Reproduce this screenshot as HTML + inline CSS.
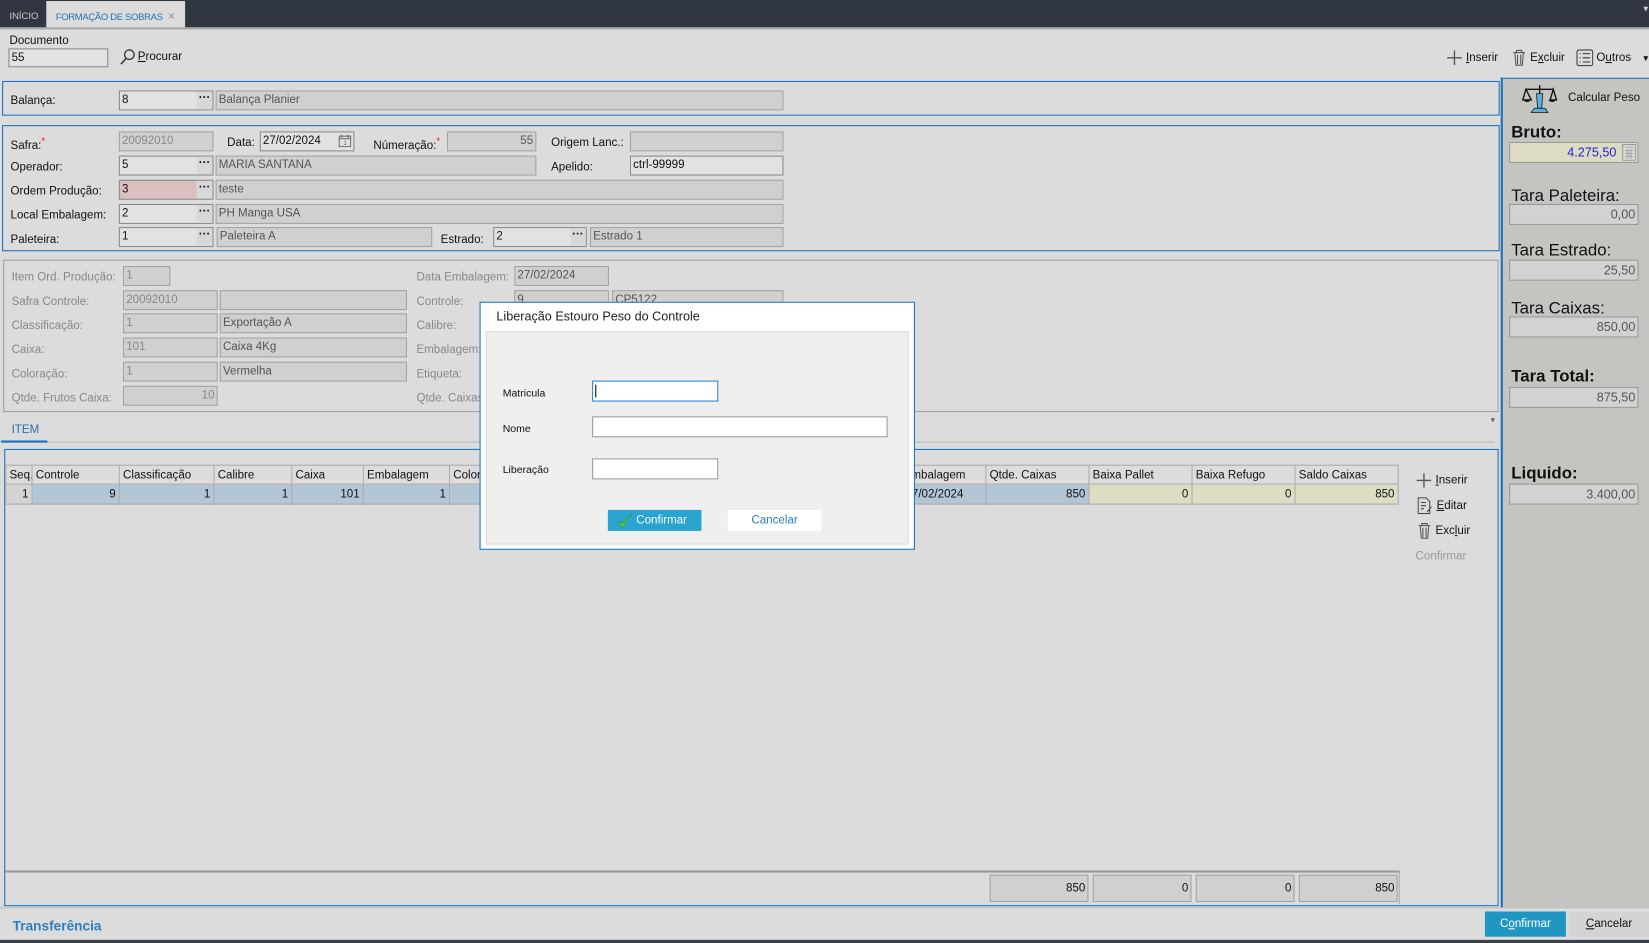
<!DOCTYPE html>
<html><head><meta charset="utf-8"><style>
html,body{margin:0;padding:0;width:1649px;height:943px;overflow:hidden;background:#dcdcdc}
#w{position:absolute;left:0;top:0;width:1568px;height:897px;transform:scale(1.05166,1.0513);transform-origin:0 0;font-family:"Liberation Sans",sans-serif;font-size:11px;color:#111}
.a{position:absolute}
.l{position:absolute;font-size:11px;white-space:nowrap}
.i{position:absolute;box-sizing:border-box;border:1px solid #8a8a8a;background:#e2e2e2;font-size:11px;padding:1px 2px;line-height:15px;white-space:nowrap;overflow:hidden}
.d{background:#d0d0d0;border-color:#a3a3a3;color:#555}
.g{color:#888}
.b{position:absolute;right:0;top:0;bottom:0;width:15px;background:#d8d8d8;text-align:center;font-weight:bold;line-height:13px;font-size:11px}
.r{text-align:right}
.pan{position:absolute;box-sizing:border-box;border:1px solid #1a6fbf}
.th,.td{position:absolute;box-sizing:border-box;border-right:1px solid #aaa;border-bottom:1px solid #aaa;padding:0 3px;line-height:18px;height:19px;font-size:11px;white-space:nowrap;overflow:hidden}
.th{background:#dcdcdc;border-top:1px solid #aaa}
.rt{position:absolute;font-size:16px;color:#111}
.ri{position:absolute;left:1435px;width:123px;height:20px;box-sizing:border-box;border:1px solid #999;background:#d2d2d2;text-align:right;padding-right:2px;color:#555;font-size:12px;line-height:18px}
u{text-decoration:underline}
</style></head><body><div id="w">
<!-- tab bar -->
<div class="a" style="left:0;top:0;width:1568px;height:26px;background:#303642"></div>
<div class="l" style="left:9px;top:10px;color:#ccc;font-size:9px">INÍCIO</div>
<div class="a" style="left:44px;top:1px;width:132px;height:26px;background:#dcdcdc"></div>
<div class="l" style="left:53px;top:10px;color:#2a6fb0;font-size:9px;letter-spacing:-0.3px">FORMAÇÃO DE SOBRAS <span style="color:#888;font-size:11px;margin-left:3px">×</span></div>
<div class="a" style="left:0;top:26px;width:1568px;height:2px;background:#a8a8a8"></div>
<div class="l" style="left:1561px;top:4px;color:#ccc;font-size:8px">▼</div>

<!-- documento -->
<div class="l" style="left:9px;top:33px">Documento</div>
<div class="i" style="left:8px;top:46px;width:95px;height:18px">55</div>
<svg class="a" style="left:113px;top:46px" width="16" height="16"><circle cx="10" cy="6" r="4.5" fill="none" stroke="#333" stroke-width="1.2"/><line x1="7" y1="9.5" x2="2" y2="15" stroke="#333" stroke-width="1.4"/></svg>
<div class="l" style="left:131px;top:48px"><u>P</u>rocurar</div>

<!-- toolbar right -->
<svg class="a" style="left:1376px;top:48px" width="14" height="14"><path d="M7 0V14M0 7H14" stroke="#555" stroke-width="1.3"/></svg>
<div class="l" style="left:1394px;top:49px"><u>I</u>nserir</div>
<svg class="a" style="left:1438px;top:47px" width="13" height="16"><path d="M1 3H12M4 3V1H9V3M2.5 3.5L3.5 15H9.5L10.5 3.5M5 5V14M8 5V14" stroke="#555" fill="none"/></svg>
<div class="l" style="left:1455px;top:49px">E<u>x</u>cluir</div>
<svg class="a" style="left:1499px;top:47px" width="16" height="16"><rect x="0.5" y="0.5" width="15" height="15" rx="2" fill="none" stroke="#333"/><path d="M3 4H4M6 4H13M3 8H4M6 8H13M3 12H4M6 12H13" stroke="#333"/></svg>
<div class="l" style="left:1518px;top:49px">O<u>u</u>tros</div>
<div class="l" style="left:1561px;top:51px;font-size:8px">▼</div>

<!-- Balança panel -->
<div class="pan" style="left:2px;top:77px;width:1424px;height:33px"></div>
<div class="l" style="left:10px;top:90px">Balança:</div>
<div class="i" style="left:113px;top:86px;width:90px;height:19px">8<span class="b">···</span></div>
<div class="i d" style="left:205px;top:86px;width:540px;height:19px">Balança Planier</div>

<!-- main panel -->
<div class="pan" style="left:2px;top:119px;width:1424px;height:120px"></div>
<div class="l" style="left:10px;top:129px">Safra:<sup style="color:red;font-size:9px">*</sup></div>
<div class="i d g" style="left:113px;top:125px;width:90px;height:19px">20092010</div>
<div class="l" style="left:216px;top:130px">Data:</div>
<div class="i" style="left:247px;top:125px;width:90px;height:19px">27/02/2024
<svg class="a" style="right:2px;top:2px" width="12" height="12"><rect x="0.5" y="1.5" width="11" height="10" fill="none" stroke="#666"/><path d="M0 4H12M3 0V3M9 0V3" stroke="#666"/><text x="4.5" y="10" font-size="6" fill="#666">1</text></svg></div>
<div class="l" style="left:355px;top:129px">Númeração:<sup style="color:red;font-size:9px">*</sup></div>
<div class="i d r" style="left:425px;top:125px;width:85px;height:19px">55</div>
<div class="l" style="left:524px;top:130px">Origem Lanc.:</div>
<div class="i d" style="left:599px;top:125px;width:146px;height:19px"></div>

<div class="l" style="left:10px;top:153px">Operador:</div>
<div class="i" style="left:113px;top:148px;width:90px;height:19px">5<span class="b">···</span></div>
<div class="i d" style="left:205px;top:148px;width:305px;height:19px">MARIA SANTANA</div>
<div class="l" style="left:524px;top:153px">Apelido:</div>
<div class="i" style="left:599px;top:148px;width:146px;height:19px">ctrl-99999</div>

<div class="l" style="left:10px;top:176px">Ordem Produção:</div>
<div class="i" style="left:113px;top:171px;width:90px;height:19px;background:#dcc0c0">3<span class="b">···</span></div>
<div class="i d" style="left:205px;top:171px;width:540px;height:19px">teste</div>

<div class="l" style="left:10px;top:199px">Local Embalagem:</div>
<div class="i" style="left:113px;top:194px;width:90px;height:19px">2<span class="b">···</span></div>
<div class="i d" style="left:205px;top:194px;width:540px;height:19px">PH Manga USA</div>

<div class="l" style="left:10px;top:222px">Paleteira:</div>
<div class="i" style="left:113px;top:216px;width:90px;height:19px">1<span class="b">···</span></div>
<div class="i d" style="left:206px;top:216px;width:205px;height:19px">Paleteira A</div>
<div class="l" style="left:419px;top:222px">Estrado:</div>
<div class="i" style="left:469px;top:216px;width:89px;height:19px">2<span class="b">···</span></div>
<div class="i d" style="left:561px;top:216px;width:184px;height:19px">Estrado 1</div>

<!-- disabled panel -->
<div class="a" style="left:3px;top:247px;width:1422px;height:145px;box-sizing:border-box;border:1px solid #a0a0a0"></div>
<div class="l g" style="left:11px;top:258px">Item Ord. Produção:</div>
<div class="i d g" style="left:117px;top:253px;width:45px;height:19px">1</div>
<div class="l g" style="left:11px;top:281px">Safra Controle:</div>
<div class="i d g" style="left:117px;top:276px;width:90px;height:19px">20092010</div>
<div class="i d" style="left:209px;top:276px;width:178px;height:19px"></div>
<div class="l g" style="left:11px;top:304px">Classificação:</div>
<div class="i d g" style="left:117px;top:298px;width:90px;height:19px">1</div>
<div class="i d" style="left:209px;top:298px;width:178px;height:19px">Exportação A</div>
<div class="l g" style="left:11px;top:327px">Caixa:</div>
<div class="i d g" style="left:117px;top:321px;width:90px;height:19px">101</div>
<div class="i d" style="left:209px;top:321px;width:178px;height:19px">Caixa 4Kg</div>
<div class="l g" style="left:11px;top:350px">Coloração:</div>
<div class="i d g" style="left:117px;top:344px;width:90px;height:19px">1</div>
<div class="i d" style="left:209px;top:344px;width:178px;height:19px">Vermelha</div>
<div class="l g" style="left:11px;top:373px">Qtde. Frutos Caixa:</div>
<div class="i d g r" style="left:117px;top:367px;width:90px;height:19px">10</div>
<div class="l g" style="left:396px;top:258px">Data Embalagem:</div>
<div class="i d" style="left:489px;top:253px;width:90px;height:19px">27/02/2024</div>
<div class="l g" style="left:396px;top:281px">Controle:</div>
<div class="i d" style="left:489px;top:276px;width:90px;height:19px">9</div>
<div class="i d" style="left:582px;top:276px;width:163px;height:19px">CP5122</div>
<div class="l g" style="left:396px;top:304px">Calibre:</div>
<div class="l g" style="left:396px;top:327px">Embalagem:</div>
<div class="l g" style="left:396px;top:350px">Etiqueta:</div>
<div class="l g" style="left:396px;top:373px">Qtde. Caixas:</div>

<!-- ITEM tab -->
<div class="l" style="left:11px;top:403px;color:#2a6fb0">ITEM</div>
<div class="a" style="left:1px;top:420px;width:1420px;height:1px;background:#b8b8b8"></div>
<div class="a" style="left:1px;top:419px;width:44px;height:2px;background:#1a6fbf"></div>
<div class="l" style="left:1416px;top:397px;font-size:7px;color:#666">▼</div>

<!-- grid panel -->
<div class="pan" style="left:4px;top:427px;width:1421px;height:435px"></div>
<div class="th" style="left:5px;top:442px;width:26px;border-left:1px solid #aaa">Seq.</div>
<div class="th" style="left:31px;top:442px;width:83px">Controle</div>
<div class="th" style="left:114px;top:442px;width:90px">Classificação</div>
<div class="th" style="left:204px;top:442px;width:74px">Calibre</div>
<div class="th" style="left:278px;top:442px;width:68px">Caixa</div>
<div class="th" style="left:346px;top:442px;width:82px">Embalagem</div>
<div class="th" style="left:428px;top:442px;width:92px">Coloração</div>
<div class="th" style="left:830px;top:442px;width:108px">Data Embalagem</div>
<div class="th" style="left:938px;top:442px;width:98px">Qtde. Caixas</div>
<div class="th" style="left:1036px;top:442px;width:98px">Baixa Pallet</div>
<div class="th" style="left:1134px;top:442px;width:98px">Baixa Refugo</div>
<div class="th" style="left:1232px;top:442px;width:98px">Saldo Caixas</div>
<div class="td r" style="left:5px;top:461px;width:26px;background:#d4d4d4;border-left:1px solid #aaa">1</div>
<div class="td r" style="left:31px;top:461px;width:83px;background:#b2c6d6">9</div>
<div class="td r" style="left:114px;top:461px;width:90px;background:#b2c6d6">1</div>
<div class="td r" style="left:204px;top:461px;width:74px;background:#b2c6d6">1</div>
<div class="td r" style="left:278px;top:461px;width:68px;background:#b2c6d6">101</div>
<div class="td r" style="left:346px;top:461px;width:82px;background:#b2c6d6">1</div>
<div class="td" style="left:428px;top:461px;width:92px;background:#b2c6d6"></div>
<div class="td" style="left:830px;top:461px;width:108px;background:#b2c6d6;padding-left:31px">27/02/2024</div>
<div class="td r" style="left:938px;top:461px;width:98px;background:#b2c6d6">850</div>
<div class="td r" style="left:1036px;top:461px;width:98px;background:#ddddc4">0</div>
<div class="td r" style="left:1134px;top:461px;width:98px;background:#ddddc4">0</div>
<div class="td r" style="left:1232px;top:461px;width:98px;background:#ddddc4">850</div>

<svg class="a" style="left:1347px;top:450px" width="14" height="14"><path d="M7 0V14M0 7H14" stroke="#555" stroke-width="1.3"/></svg>
<div class="l" style="left:1365px;top:451px"><u>I</u>nserir</div>
<svg class="a" style="left:1348px;top:473px" width="14" height="16"><path d="M0.5 0.5H8L11.5 4V15.5H0.5Z M3 5H8M3 8H8M3 11H6M9 14L13 9" fill="none" stroke="#444"/></svg>
<div class="l" style="left:1366px;top:475px"><u>E</u>ditar</div>
<svg class="a" style="left:1348px;top:497px" width="13" height="16"><path d="M1 3H12M4 3V1H9V3M2.5 3.5L3.5 15H9.5L10.5 3.5M5 5V14M8 5V14" stroke="#555" fill="none"/></svg>
<div class="l" style="left:1365px;top:499px">Exc<u>l</u>uir</div>
<div class="l" style="left:1346px;top:523px;color:#999">Confirmar</div>

<div class="a" style="left:5px;top:828px;width:1326px;height:2px;background:#999"></div>
<div class="a" style="left:1330px;top:828px;width:1px;height:32px;background:#aaa"></div>
<div class="i d r" style="left:941px;top:832px;width:94px;height:26px;line-height:22px;color:#111">850</div>
<div class="i d r" style="left:1039px;top:832px;width:94px;height:26px;line-height:22px;color:#111">0</div>
<div class="i d r" style="left:1137px;top:832px;width:94px;height:26px;line-height:22px;color:#111">0</div>
<div class="i d r" style="left:1235px;top:832px;width:94px;height:26px;line-height:22px;color:#111">850</div>

<!-- right panel -->
<div class="a" style="left:1427px;top:74px;width:141px;height:789px;background:#c6c4c0;box-sizing:border-box;border-left:2px solid #1a6fbf;border-top:1px solid #1a6fbf"></div>
<svg class="a" style="left:1447px;top:79px" width="34" height="30"><path d="M17 2V26M4 6H30M4 6L1 16H9ZM30 6L27 16H33Z" stroke="#111" stroke-width="1.3" fill="none"/><path d="M1 16Q5 20 9 16ZM25 16Q29 20 33 16Z" fill="#111"/><path d="M14 10H20L19 24H15Z" fill="#5ab0d8" stroke="#111" stroke-width=".7"/><path d="M9 28H25L22 24H12Z" fill="#5ab0d8" stroke="#111" stroke-width=".7"/></svg>
<div class="l" style="left:1491px;top:87px">Calcular Peso</div>
<div class="rt" style="left:1437px;top:118px;font-weight:bold">Bruto:</div>
<div class="ri" style="top:135px;background:#dcdcc4;color:#2222dd;padding-right:20px">4.275,50</div>
<svg class="a" style="left:1542px;top:137px" width="14" height="16"><rect x="1" y="0.5" width="12" height="15" fill="#ddd" stroke="#999"/><path d="M3 3H11M3 6H11M3 9H11M3 12H11M5 5V14M7 5V14M9 5V14" stroke="#aaa"/></svg>
<div class="rt" style="left:1437px;top:178px">Tara Paleteira:</div>
<div class="ri" style="top:194px">0,00</div>
<div class="rt" style="left:1437px;top:230px">Tara Estrado:</div>
<div class="ri" style="top:247px">25,50</div>
<div class="rt" style="left:1437px;top:285px">Tara Caixas:</div>
<div class="ri" style="top:301px">850,00</div>
<div class="rt" style="left:1437px;top:350px;font-weight:bold">Tara Total:</div>
<div class="ri" style="top:368px">875,50</div>
<div class="rt" style="left:1437px;top:442px;font-weight:bold">Liquido:</div>
<div class="ri" style="top:460px">3.400,00</div>

<!-- bottom -->
<div class="a" style="left:0;top:863px;width:1568px;height:1px;background:#bbb"></div>
<div class="l" style="left:12px;top:873px;color:#2a80c0;font-weight:bold;font-size:13px">Transferência</div>
<div class="a" style="left:1412px;top:867px;width:77px;height:24px;background:#2196c0;color:#fff;text-align:center;line-height:24px">C<u>o</u>nfirmar</div>
<div class="a" style="left:1492px;top:867px;width:76px;height:24px;background:#d4d4d4;text-align:center;line-height:24px"><u>C</u>ancelar</div>
<div class="a" style="left:0;top:894px;width:1568px;height:3px;background:#3a4048"></div>

<!-- dialog -->
<div class="a" style="left:456px;top:287px;width:414px;height:236px;box-sizing:border-box;border:1px solid #1a6fbf;background:#fff"></div>
<div class="l" style="left:472px;top:294px;font-size:12px;color:#222">Liberação Estouro Peso do Controle</div>
<div class="a" style="left:462px;top:315px;width:402px;height:203px;box-sizing:border-box;border:1px solid #d8d8d8;background:#efefef"></div>
<div class="l" style="left:478px;top:369px;font-size:10px">Matricula</div>
<div class="a" style="left:563px;top:362px;width:120px;height:20px;box-sizing:border-box;border:1px solid #2a7fd0;background:#fff"><div class="a" style="left:2px;top:3px;width:1px;height:12px;background:#000"></div></div>
<div class="l" style="left:478px;top:403px;font-size:10px">Nome</div>
<div class="a" style="left:563px;top:396px;width:281px;height:20px;box-sizing:border-box;border:1px solid #999;background:#fff"></div>
<div class="l" style="left:478px;top:442px;font-size:10px">Liberação</div>
<div class="a" style="left:563px;top:436px;width:120px;height:20px;box-sizing:border-box;border:1px solid #999;background:#fff"></div>
<div class="a" style="left:578px;top:485px;width:89px;height:20px;background:#29a3d0;color:#fff;line-height:20px;font-size:11px"><svg class="a" style="left:8px;top:2px" width="16" height="16"><path d="M1 9L6 15L15 1L6 11Z" fill="#5c5" stroke="#393" stroke-width=".6"/></svg><span style="position:absolute;left:27px">Confirmar</span></div>
<div class="a" style="left:692px;top:485px;width:89px;height:20px;background:#fff;color:#2a80c0;line-height:20px;text-align:center">Cancelar</div>
</div></body></html>
